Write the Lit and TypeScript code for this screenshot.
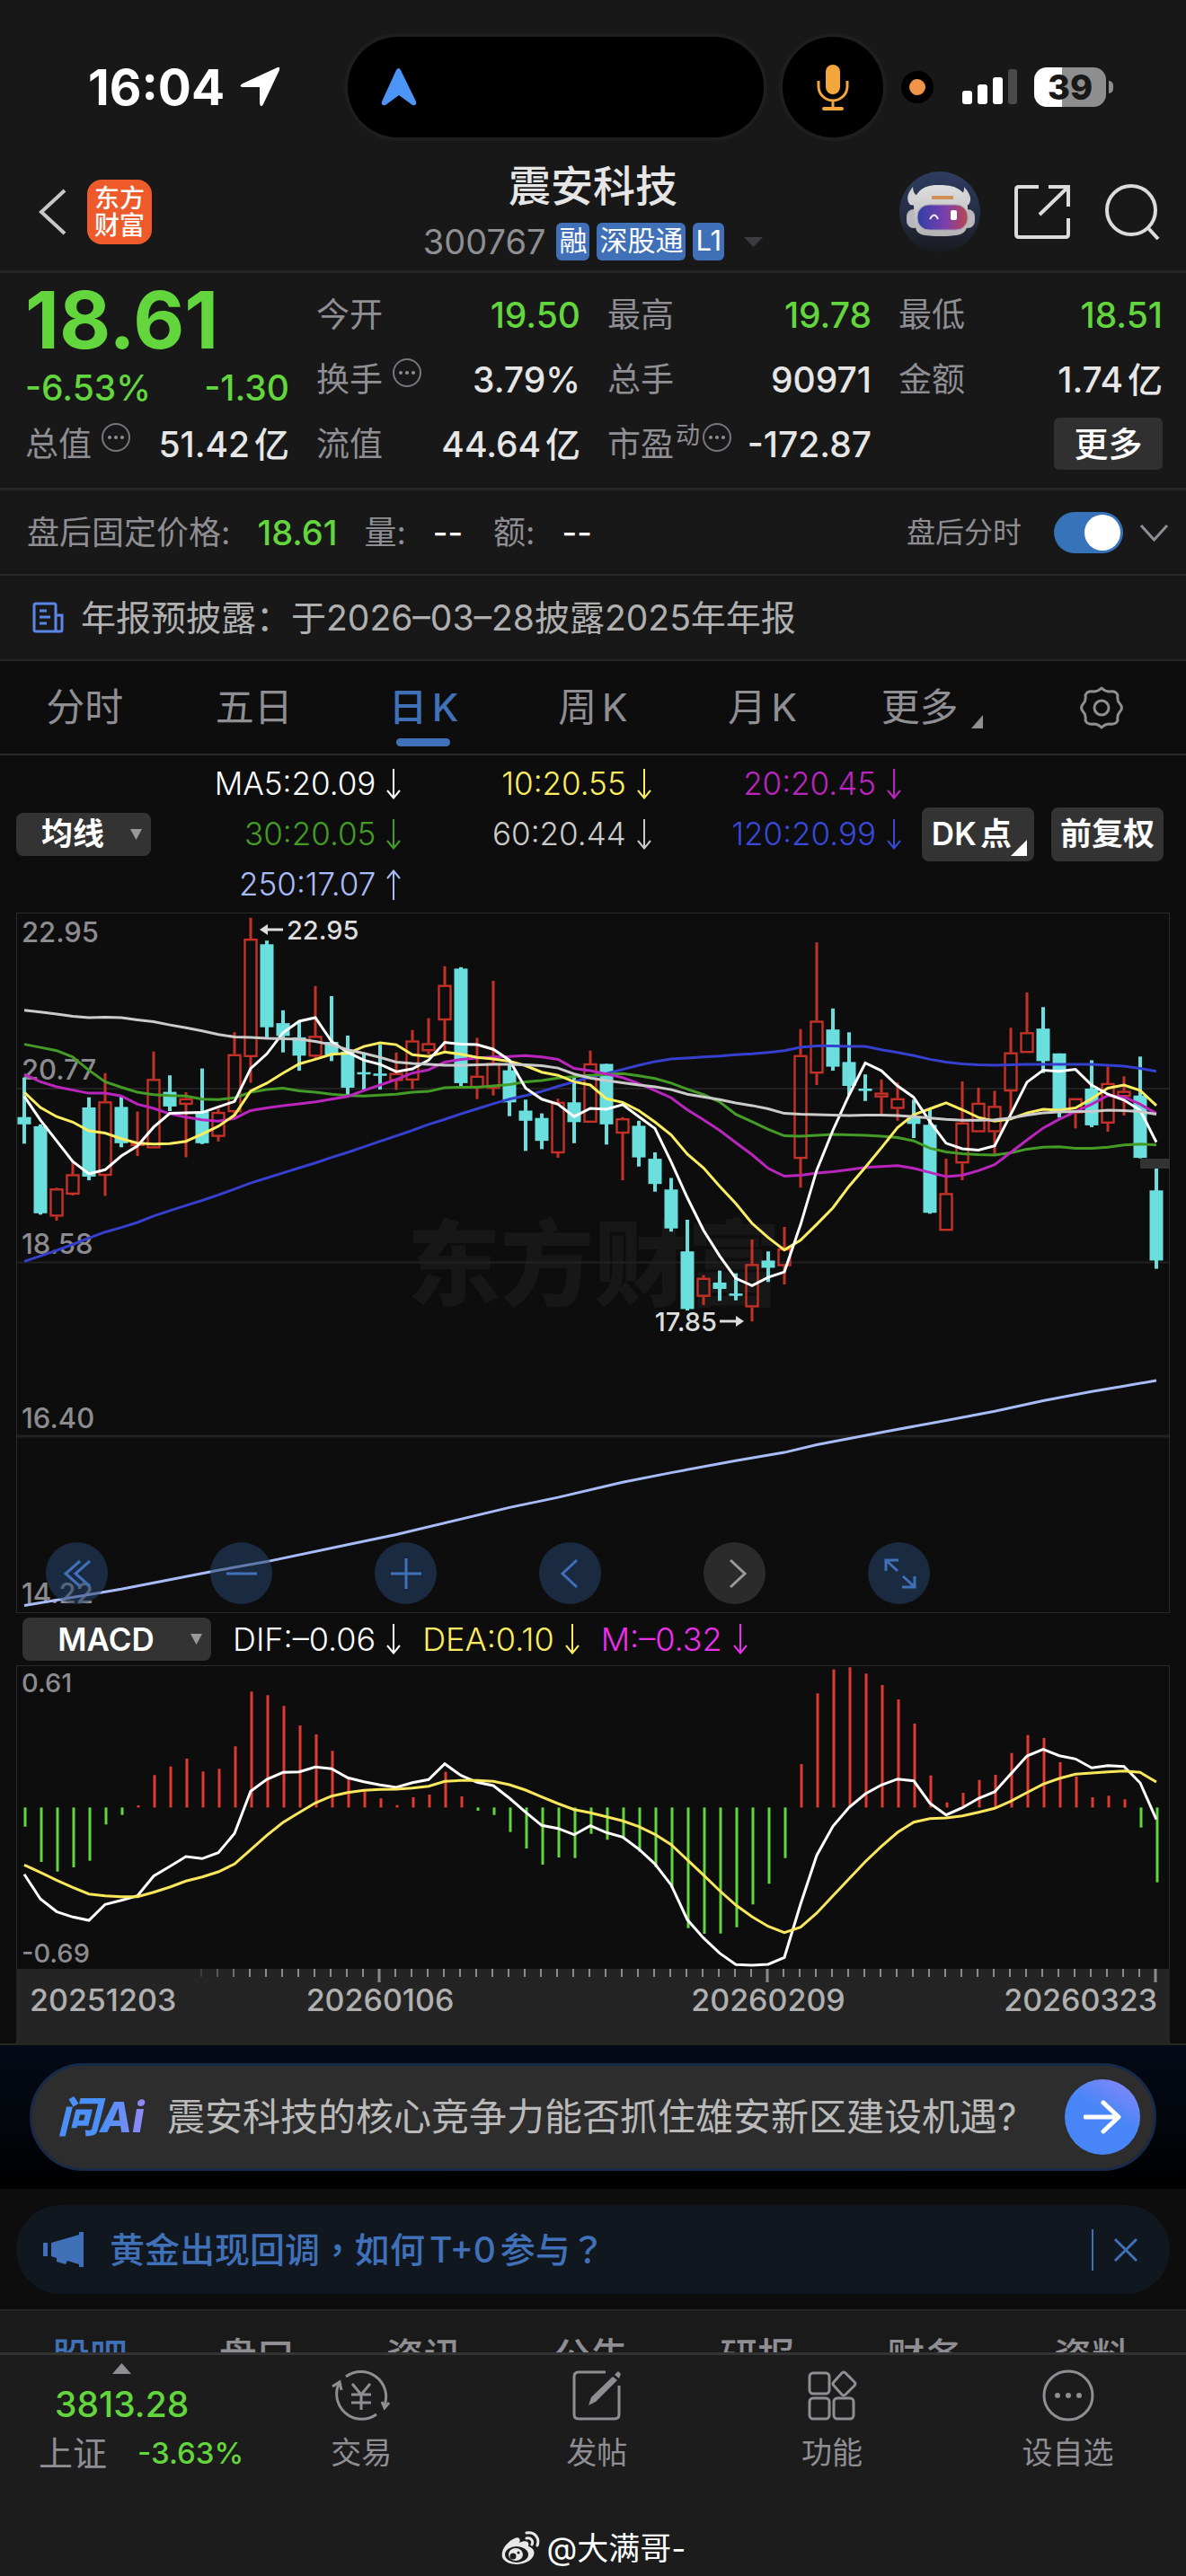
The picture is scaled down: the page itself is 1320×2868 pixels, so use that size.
import { LitElement, html, svg, css, nothing } from "lit";
import { customElement, state } from "lit/decorators.js";
import { classMap } from "lit/directives/class-map.js";

/* ---------- data ---------- */

type Tone = "up" | "down" | "plain";

// Candle: direction, high, body top, body bottom, low (grid units, see GRID)
type Candle = ["r" | "c", number, number, number, number];

const candles: Candle[] = [
  ["c", 372, 458, 474, 516], ["c", 474, 478, 668, 671], ["r", 612, 614, 675, 684], ["r", 556, 583, 627, 629],
  ["c", 415, 437, 588, 596], ["r", 362, 424, 586, 630], ["c", 412, 436, 515, 524], ["r", 446, 512, 521, 543],
  ["r", 315, 375, 526, 526], ["c", 367, 403, 435, 445], ["r", 404, 417, 431, 546], ["c", 352, 446, 515, 517],
  ["r", 440, 447, 501, 511], ["r", 273, 321, 447, 455], ["r", 23, 69, 327, 383], ["c", 73, 81, 262, 284],
  ["c", 225, 253, 281, 317], ["c", 250, 284, 324, 357], ["r", 172, 281, 326, 330], ["c", 194, 294, 322, 336],
  ["c", 280, 315, 394, 410], ["c", 320, 360, 365, 398], ["c", 300, 363, 368, 398], ["r", 317, 362, 379, 399],
  ["r", 268, 291, 378, 397], ["r", 242, 297, 314, 321], ["r", 129, 170, 247, 317], ["c", 131, 134, 384, 391],
  ["r", 285, 368, 394, 419], ["r", 161, 340, 396, 411], ["c", 345, 356, 426, 456], ["c", 420, 444, 466, 532],
  ["c", 450, 460, 510, 528], ["r", 418, 425, 537, 547], ["c", 372, 426, 469, 515], ["r", 313, 341, 470, 470],
  ["c", 342, 342, 474, 518], ["r", 458, 461, 494, 596], ["c", 466, 477, 546, 566], ["c", 535, 549, 604, 621],
  ["c", 591, 616, 701, 708], ["c", 682, 751, 877, 880], ["r", 803, 809, 850, 868], ["c", 793, 819, 833, 859],
  ["c", 799, 843, 848, 858], ["r", 725, 779, 873, 904], ["c", 751, 771, 787, 818], ["r", 698, 745, 783, 823],
  ["r", 266, 323, 549, 612], ["r", 77, 248, 363, 388], ["c", 221, 267, 348, 357], ["c", 273, 338, 390, 410],
  ["c", 365, 396, 401, 423], ["r", 376, 405, 415, 452], ["r", 382, 417, 440, 466], ["c", 420, 460, 473, 504],
  ["c", 440, 475, 667, 669], ["r", 549, 624, 706, 706], ["r", 380, 470, 559, 596], ["r", 394, 427, 491, 491],
  ["r", 401, 434, 491, 540], ["r", 263, 317, 402, 450], ["r", 186, 273, 318, 318], ["c", 218, 265, 336, 362],
  ["c", 319, 319, 444, 459], ["r", 417, 417, 450, 483], ["c", 334, 396, 476, 480], ["r", 348, 384, 472, 490],
  ["r", 369, 401, 414, 455], ["c", 326, 411, 547, 548], ["c", 569, 618, 771, 789],
];

const averages: { color: string; width: number; values: number[] }[] = [
  { color: "#3640d0", width: 3, values: [773, 761, 749, 736, 722, 709, 699, 688, 674, 662, 651, 640, 628, 615, 602, 591, 580, 569, 558, 546, 535, 523, 511, 499, 487, 474, 463, 451, 440, 429, 419, 411, 402, 391, 381, 371, 363, 354, 345, 337, 331, 329, 327, 325, 322, 320, 317, 313, 306, 303, 303, 304, 304, 311, 317, 324, 332, 338, 342, 344, 345, 344, 343, 343, 343, 343, 343, 345, 347, 352, 358] },
  { color: "#449c27", width: 3, values: [299, 306, 313, 327, 356, 381, 393, 404, 409, 411, 412, 419, 420, 416, 404, 398, 395, 401, 404, 408, 411, 412, 410, 408, 404, 402, 394, 393, 393, 390, 387, 381, 378, 373, 370, 367, 365, 363, 368, 374, 384, 397, 409, 425, 452, 468, 485, 499, 500, 498, 496, 497, 498, 500, 503, 510, 526, 534, 538, 540, 541, 536, 528, 524, 523, 526, 526, 524, 519, 517, 519] },
  { color: "#ba25bd", width: 3, values: [365, 381, 392, 399, 406, 406, 412, 430, 439, 451, 458, 464, 467, 461, 444, 438, 433, 429, 425, 419, 413, 400, 388, 376, 362, 355, 338, 332, 329, 327, 326, 324, 327, 332, 352, 357, 364, 372, 385, 400, 416, 442, 464, 487, 514, 540, 570, 587, 585, 580, 577, 573, 568, 566, 564, 570, 579, 588, 585, 575, 562, 535, 508, 482, 463, 446, 430, 411, 414, 430, 450] },
  { color: "#fdee60", width: 3, values: [404, 437, 457, 469, 488, 493, 505, 515, 517, 516, 511, 495, 478, 454, 401, 384, 362, 342, 332, 321, 319, 304, 296, 300, 322, 326, 316, 321, 328, 331, 336, 346, 360, 367, 381, 388, 418, 426, 444, 469, 497, 539, 569, 609, 647, 690, 721, 748, 727, 692, 656, 609, 568, 525, 481, 453, 440, 427, 442, 459, 467, 462, 449, 441, 443, 438, 418, 395, 388, 400, 433] },
  { color: "#ffffff", width: 3, values: [413, 465, 510, 555, 582, 573, 543, 521, 480, 450, 449, 448, 436, 424, 352, 320, 274, 249, 241, 293, 317, 334, 343, 359, 353, 334, 295, 299, 300, 310, 334, 395, 419, 430, 457, 439, 441, 431, 457, 483, 556, 634, 705, 761, 810, 826, 808, 796, 693, 574, 487, 410, 340, 357, 390, 415, 468, 515, 527, 530, 521, 452, 382, 356, 358, 354, 388, 408, 421, 443, 513] },
  { color: "#cbcbcb", width: 3, values: [225, 229, 233, 238, 241, 240, 241, 246, 250, 257, 263, 270, 278, 283, 284, 286, 287, 288, 293, 300, 311, 319, 328, 338, 341, 343, 345, 345, 344, 343, 343, 344, 346, 351, 364, 373, 378, 383, 388, 392, 398, 408, 414, 420, 427, 433, 440, 450, 452, 453, 454, 455, 454, 454, 455, 457, 460, 463, 465, 465, 464, 460, 454, 449, 447, 446, 446, 443, 444, 446, 452] },
];

const yearAverage: [number, number][] = [
  [0, 1524], [6, 1488], [12, 1447], [15, 1428], [20, 1391], [23, 1369], [30, 1310], [33, 1288], [37, 1255],
  [40, 1234], [44, 1208], [47, 1190], [49, 1173], [53, 1146], [57, 1120], [60, 1100], [63, 1077], [66, 1057], [68, 1045], [70, 1033],
];

const macdBars = [
  731, 849, 881, 867, 845, 724, 692, 660, 559, 530, 504, 547, 538, 463, 280, 292, 328, 393, 423, 478, 570, 614, 637, 659,
  633, 624, 548, 630, 678, 692, 749, 804, 858, 834, 836, 755, 775, 772, 815, 866, 936, 1070, 1089, 1088, 1067, 991, 922,
  836, 522, 286, 206, 199, 220, 258, 306, 387, 560, 650, 618, 575, 558, 485, 425, 435, 516, 563, 633, 628, 640, 734, 917,
];
const dif = [
  890, 973, 1015, 1033, 1044, 991, 977, 962, 896, 864, 831, 838, 818, 754, 613, 573, 550, 548, 532, 538, 568, 581, 592,
  600, 584, 574, 521, 560, 583, 594, 636, 683, 727, 737, 758, 728, 751, 766, 806, 856, 926, 1042, 1103, 1154, 1192, 1194,
  1191, 1168, 990, 827, 730, 667, 622, 592, 572, 578, 653, 692, 668, 637, 615, 555, 495, 473, 494, 505, 535, 527, 530, 585, 707,
];
const dea = [
  859, 884, 910, 934, 956, 962, 965, 965, 950, 933, 913, 899, 882, 856, 808, 760, 717, 684, 652, 629, 617, 610, 607, 606,
  602, 596, 580, 577, 577, 580, 591, 609, 632, 654, 674, 685, 698, 712, 731, 757, 791, 842, 893, 945, 993, 1032, 1064,
  1085, 1067, 1020, 962, 905, 848, 797, 750, 716, 704, 702, 695, 683, 670, 646, 617, 589, 570, 556, 552, 548, 545, 550, 582,
];

/* ---------- shared pieces ---------- */

const STEP = 18;
const GRID = 1.96;
const round = (v: number) => Math.round(v * 10) / 10;

const arrowIcon = (up = false) => html`<svg class="arrow" viewBox="0 0 16 34" aria-hidden="true">
  <path d=${up ? "M8 34V2M1 10L8 1.500L15 10" : "M8 0V32M1 24L8 32.500L15 24"} fill="none" stroke="currentColor" stroke-width="2" />
</svg>`;

const dotsIcon = () => html`<svg class="dots" viewBox="0 0 34 34" aria-hidden="true">
  <circle cx="17" cy="17" r="15" fill="none" stroke="#77777b" stroke-width="2" />
  <circle cx="10" cy="17" r="2" fill="#8e8e93" /><circle cx="17" cy="17" r="2" fill="#8e8e93" /><circle cx="24" cy="17" r="2" fill="#8e8e93" />
</svg>`;

/* ---------- K-line chart ---------- */

@customElement("kline-chart")
export class KlineChart extends LitElement {
  static styles = css`
    :host { display: block; }
    .canvas { display: block; width: 100%; height: auto; }
    text { font-family: Inter, "Noto Sans CJK SC", sans-serif; }
    .scale { font-size: 31px; font-weight: 500; fill: #8c8c90; }
    .mark { font-size: 29px; font-weight: 500; fill: #dedede; }
    .brand { font-size: 104px; font-weight: 900; fill: #171717; }
  `;

  private x(i: number) { return 9 + i * STEP; }
  private y(v: number) { return round(v / GRID - 6); }

  private line(points: [number, number][]) {
    return points.map(([i, v]) => `${this.x(i)},${this.y(v)}`).join(" ");
  }

  private candle([dir, high, top, bottom, low]: Candle, i: number) {
    const x = this.x(i);
    const t = this.y(top);
    const b = this.y(bottom);
    if (dir === "c") {
      return svg`<path d=${`M${x} ${this.y(high)}V${this.y(low)}`} stroke="#6adfde" stroke-width="4" />
        <rect x=${x - 7.5} y=${t} width="15" height=${Math.max(2, b - t)} fill="#6adfde" />`;
    }
    return svg`<path d=${`M${x} ${this.y(high)}V${t}M${x} ${b}V${this.y(low)}`} stroke="#c53027" stroke-width="3" />
      <rect x=${x - 6.5} y=${t + 1} width="13" height=${Math.max(2, b - t - 2)} fill="none" stroke="#c53027" stroke-width="2.400" />`;
  }

  render() {
    return html`<svg class="canvas" viewBox="0 0 1284 780" role="img" aria-label="日K">
      <text class="brand" x="643" y="430" text-anchor="middle">东方财富</text>
      <path d="M0 196H1284M0 389.500H1284" stroke="#212121" stroke-width="2" />
      <path d="M0 583H1284" stroke="#212121" stroke-width="3" />
      <rect x="0.500" y="0.500" width="1283" height="779" fill="none" stroke="#2a2a2a" />
      <text class="scale" x="6" y="33">22.95</text>
      <text class="scale" x="6" y="186">20.77</text>
      <text class="scale" x="6" y="380">18.58</text>
      <text class="scale" x="6" y="574">16.40</text>
      <text class="scale" x="6" y="769">14.22</text>
      ${candles.map((c, i) => this.candle(c, i))}
      <rect x="1251" y="274" width="33" height="11" fill="#333333" />
      ${averages.map((a) => svg`<polyline points=${this.line(a.values.map((v, i) => [i, v]))} fill="none" stroke=${a.color} stroke-width=${a.width} />`)}
      <polyline points=${this.line(yearAverage)} fill="none" stroke="#a9bcfa" stroke-width="3" />
      <path d="M278 19H297" stroke="#dedede" stroke-width="3" /><path d="M271 19L280 13V25Z" fill="#dedede" />
      <text class="mark" x="301" y="30">22.95</text>
      <path d="M783 455H802" stroke="#dedede" stroke-width="3" /><path d="M810 455L801 449V461Z" fill="#dedede" />
      <text class="mark" x="780" y="466" text-anchor="end">17.85</text>
    </svg>`;
  }
}

/* ---------- MACD chart with the date axis ---------- */

@customElement("macd-chart")
export class MacdChart extends LitElement {
  static styles = css`
    :host { display: block; }
    .canvas { display: block; width: 100%; height: auto; }
    text { font-family: Inter, sans-serif; font-weight: 500; }
    .scale { font-size: 29px; fill: #8c8c90; }
    .date { font-size: 34px; fill: #b0b0b0; }
  `;

  private y(v: number) { return round(v / 3 - 64); }

  private line(values: number[]) {
    return values.map((v, i) => `${9 + i * STEP},${this.y(v)}`).join(" ");
  }

  private tick(i: number) {
    const major = i === 22 || i === 46 || i === 70;
    const opacity = i < 14 ? 0.25 * (i - 10) : 1;
    return svg`<path d=${`M${8 + i * STEP} 338V${major ? 353 : 347}`} stroke="#8a8a8a" stroke-width=${major ? 3 : 2} opacity=${opacity} />`;
  }

  render() {
    const zero = 158.4;
    return html`<svg class="canvas" viewBox="0 0 1284 421" role="img" aria-label="MACD">
      <rect x="0.500" y="0.500" width="1283" height="420" fill="none" stroke="#2a2a2a" />
      <rect x="0" y="338" width="1284" height="83" fill="#242424" />
      <text class="scale" x="6" y="30">0.61</text>
      <text class="scale" x="6" y="331">-0.69</text>
      ${macdBars.map((v, i) => svg`<path d=${`M${10 + i * STEP} ${zero}V${this.y(v)}`} stroke=${v < 667 ? "#e03a31" : "#63d63e"} stroke-width="3" />`)}
      <polyline points=${this.line(dif)} fill="none" stroke="#ffffff" stroke-width="3" />
      <polyline points=${this.line(dea)} fill="none" stroke="#fbe75b" stroke-width="3" />
      ${Array.from({ length: 60 }, (_, k) => this.tick(k + 11))}
      <text class="date" x="15" y="385">20251203</text>
      <text class="date" x="405" y="385" text-anchor="middle">20260106</text>
      <text class="date" x="837" y="385" text-anchor="middle">20260209</text>
      <text class="date" x="1270" y="385" text-anchor="end">20260323</text>
    </svg>`;
  }
}

/* ---------- page ---------- */

@customElement("app-root")
export class AppRoot extends LitElement {
  @state() private period = 2;
  @state() private afterHours = true;

  static styles = css`
    :host {
      display: block;
      background: #0d0d0d;
      color: #e6e6e6;
      font-family: Inter, "Noto Sans CJK SC", sans-serif;
      font-size: 36px;
      line-height: 1;
      text-autospace: normal;
    }
    * { box-sizing: border-box; }
    svg { display: block; flex: none; }
    button, select, input { font: inherit; color: inherit; margin: 0; padding: 0; border: 0; background: none; }
    a { color: inherit; text-decoration: none; }
    h1 { margin: 0; }
    .green { color: #63d63e; }

    .top { background: #181818; }

    .status { display: flex; align-items: center; height: 182px; padding: 12px 80px 0 98px; }
    .clock { font-size: 55px; font-weight: 700; color: #fff; width: 168px; white-space: nowrap; }
    .locate { width: 46px; height: 46px; }
    .island { display: flex; align-items: center; height: 112px; margin-left: 75px; width: 463px; border-radius: 56px; background: #000; box-shadow: 0 0 0 4px #1e1e1e; padding-left: 37px; }
    .mic { display: grid; place-items: center; width: 112px; height: 112px; margin-left: 21px; border-radius: 50%; background: #000; box-shadow: 0 0 0 4px #1e1e1e; }
    .dot { width: 36px; height: 36px; margin-left: 20px; border: 9px solid #000; border-radius: 50%; background: #f0944a; }
    .signal { width: 61px; height: 40px; margin-left: 32px; }
    .battery { position: relative; display: grid; place-items: center; width: 80px; height: 44px; margin-left: 19px; border-radius: 14px; background: linear-gradient(90deg, #fff 39%, #8e8e8e 39%); font-size: 38px; font-weight: 800; color: #181818; }
    .battery::after { content: ""; position: absolute; right: -8px; top: 15px; width: 5px; height: 14px; border-radius: 0 5px 5px 0; background: #8e8e8e; }

    .header { display: grid; grid-template-columns: 1fr auto 1fr; align-items: center; height: 122px; padding: 0 29px 13px; border-bottom: 3px solid #262626; }
    .lead { display: flex; align-items: center; gap: 22px; padding-left: 13px; }
    .brand { display: grid; place-content: center; width: 72px; height: 72px; border-radius: 16px; background: #ee5a2a; color: #fff; font-size: 28px; line-height: 30px; font-weight: 500; }
    .name { display: flex; flex-direction: column; align-items: center; gap: 16px; }
    .title { font-size: 47px; line-height: 50px; font-weight: 500; color: #e6e6e6; }
    .tags { display: flex; align-items: center; gap: 8px; font-size: 31px; color: #fff; }
    .code { font-size: 38px; color: #8e8e93; margin-right: 4px; }
    .tag { height: 42px; line-height: 40px; padding: 0 3px; border-radius: 6px; background: #4070b8; }
    .expand { margin-left: 14px; }
    .actions { display: flex; justify-content: flex-end; align-items: center; gap: 38px; }

    .quote { display: grid; grid-template-columns: repeat(4, 1fr); grid-auto-rows: 72px; column-gap: 30px; height: 242px; padding: 10px 26px 0 28px; border-bottom: 3px solid #262626; }
    .last { grid-row: span 2; display: flex; flex-direction: column; justify-content: space-between; padding-bottom: 6px; }
    .price { font-size: 88px; font-weight: 700; line-height: 84px; }
    .change { display: flex; justify-content: space-between; font-size: 39px; line-height: 40px; font-weight: 500; }
    .stat { display: flex; align-items: center; justify-content: space-between; font-size: 39px; font-weight: 500; white-space: nowrap; }
    .label { display: flex; align-items: center; gap: 10px; color: #8e8e93; font-size: 37px; font-weight: 400; }
    .dots { width: 34px; height: 34px; margin-bottom: 14px; }
    .sup { font-size: 27px; margin: 0 -8px 20px -8px; }
    .more { justify-self: end; align-self: center; width: 121px; height: 58px; border-radius: 6px; background: #303030; color: #fff; font-size: 38px; font-weight: 500; }

    .after { display: flex; align-items: center; height: 95px; padding: 0 19px 0 30px; border-bottom: 2px solid #262626; font-size: 36px; color: #8e8e93; white-space: nowrap; }
    .after-value { margin: 0 30px 0 30px; font-size: 38px; font-weight: 500; }
    .after-none { margin: 0 34px 0 30px; color: #fff; font-weight: 500; }
    .switch-label { display: flex; align-items: center; gap: 36px; margin-left: auto; font-size: 32px; }
    .switch { appearance: none; position: relative; width: 77px; height: 46px; border-radius: 23px; background: #3673b9; }
    .switch::after { content: ""; position: absolute; left: 3px; top: 3px; width: 40px; height: 40px; border-radius: 50%; background: #fff; }
    .switch:checked::after { left: auto; right: 3px; }
    .fold { margin-left: 18px; }

    .notice { display: flex; align-items: center; gap: 19px; height: 95px; padding: 0 36px; border-bottom: 2px solid #262626; font-size: 39px; color: #b0b0b0; text-autospace: no-autospace; }

    .periods { display: grid; grid-template-columns: repeat(7, 1fr); height: 105px; border-bottom: 2px solid #262626; }
    .period { position: relative; display: flex; align-items: center; justify-content: center; font-size: 43px; color: #8e8e93; }
    .active { color: #4070b8; font-weight: 500; }
    .active::after { content: ""; position: absolute; left: 50%; bottom: 8px; width: 60px; height: 9px; margin-left: -30px; border-radius: 5px; background: #4070b8; }
    .corner { align-self: flex-end; margin: 0 0 28px 14px; }

    .legend { display: flex; align-items: center; height: 175px; padding: 0 25px 0 18px; }
    .picker { position: relative; display: flex; align-items: center; height: 48px; border-radius: 8px; background: #333; color: #fff; }
    .picker select { appearance: none; height: 48px; width: 100%; padding: 0 50px 0 26px; font-size: 35px; font-weight: 600; text-align: center; }
    .picker svg { position: absolute; right: 10px; pointer-events: none; }
    .ma-picker { width: 150px; }
    .macd-picker { width: 210px; }
    .values { flex: 1; display: grid; grid-template-columns: repeat(3, 1fr); grid-auto-rows: 56px; }
    .value { display: flex; align-items: center; justify-content: flex-end; gap: 12px; font-size: 35px; font-weight: 300; white-space: nowrap; }
    .arrow { width: 16px; height: 34px; }
    .chip { position: relative; width: 125px; height: 60px; border-radius: 8px; background: #333; color: #fff; font-size: 35px; font-weight: 600; white-space: nowrap; }
    .dk { margin: 0 19px 0 23px; padding-right: 14px; }
    .chip svg { position: absolute; right: 8px; bottom: 6px; }
    .white { color: #fff; } .yellow { color: #fdee60; } .magenta { color: #ba25bd; } .leaf { color: #449c27; }
    .silver { color: #cbcbcb; } .blue { color: #3848d8; } .sky { color: #a9bcfa; } .pink { color: #ee30ee; }

    .chart { position: relative; margin: 0 18px; }
    .tools { position: absolute; left: 33px; bottom: 10px; display: flex; gap: 114px; }
    .tool { display: grid; place-items: center; width: 69px; height: 69px; border-radius: 50%; background: rgba(38, 68, 108, 0.55); color: #4070b8; }
    .idle { background: #2b2b2b; color: #9a9a9a; }

    .macd-head { display: flex; align-items: center; gap: 24px; height: 58px; padding: 0 25px; }
    .macd-head .value { font-size: 36px; }
    .axis-end { height: 2px; background: #262626; }

    .ask { padding: 20px 33px; background: linear-gradient(#040b17, #000); }
    .ask-pill { display: flex; align-items: center; height: 120px; padding: 0 15px 0 28px; border: 3px solid #182a49; border-radius: 60px; background: #2d2d2d; }
    .ask-logo { width: 102px; font-size: 47px; font-weight: 800; font-style: italic; background: linear-gradient(90deg, #4a90f8 50%, #9a88f4); -webkit-background-clip: text; background-clip: text; color: transparent; white-space: nowrap; line-height: 60px; text-autospace: no-autospace; }
    .ask-text { flex: 1; margin-left: 20px; font-size: 42px; line-height: 60px; color: #bababa; white-space: nowrap; }
    .ask-go { display: grid; place-items: center; width: 84px; height: 84px; border-radius: 50%; background: linear-gradient(30deg, #4886f7 55%, #9088f8); }

    .tip { display: flex; align-items: center; height: 99px; margin: 18px 18px 17px; padding: 0 35px 0 30px; border-radius: 50px; background: #11171f; color: #4070b8; }
    .tip-text { flex: 1; margin-left: 28px; font-size: 39px; font-weight: 500; font-family: Inter, "Noto Sans CJK TC", sans-serif; }
    .tip-line { width: 2px; height: 46px; margin-right: 22px; background: #4070b8; }

    .sections { display: grid; grid-template-columns: repeat(7, 1fr); height: 48px; padding: 0 12px 0 7px; border-top: 2px solid #262626; background: #1a1a1a; overflow: hidden; }
    .section { align-self: start; margin-top: 26px; height: 50px; font-size: 42px; line-height: 50px; font-weight: 500; color: #8e8e93; text-align: center; }
    .section.current { color: #4070b8; }

    .dock { background: #1c1c1c; border-top: 3px solid #333; }
    .dock-row { display: grid; grid-template-columns: 271fr 262fr 262fr 262fr 263fr; height: 150px; color: #8e8e93; }
    .dock-item { display: flex; flex-direction: column; align-items: center; justify-content: flex-start; gap: 14px; padding-top: 15px; font-size: 34px; line-height: 40px; }
    .index { display: flex; flex-direction: column; align-items: center; padding-top: 9px; font-weight: 500; }
    .index-price { margin-top: 14px; font-size: 39px; line-height: 40px; }
    .index-row { display: flex; align-items: center; gap: 34px; margin-top: 12px; padding-left: 43px; align-self: flex-start; font-size: 38px; line-height: 44px; font-weight: 400; white-space: nowrap; }
    .index-row .green { font-size: 33px; font-weight: 500; }
    .credit { display: flex; align-items: center; justify-content: center; gap: 8px; height: 96px; padding-top: 34px; font-size: 35px; line-height: 40px; color: #fff; text-autospace: no-autospace; }
  `;

  private stat(label: string, value: string, tone: Tone = "plain", dots = false, sup = "") {
    return html`<div class="stat">
      <span class="label">${label}${sup ? html`<span class="sup">${sup}</span>` : nothing}${dots ? dotsIcon() : nothing}</span>
      <span class=${tone === "down" ? "green" : ""}>${value}</span>
    </div>`;
  }

  private statusBar() {
    return html`<div class="status">
      <div class="clock">16:04</div>
      <svg class="locate" viewBox="0 0 46 46"><path d="M43 1Q46 0 45 4L27 42Q24 47 23 41V23H4Q-1 22 4 19Z" fill="#fff" /></svg>
      <div class="island"><svg width="40" height="42" viewBox="0 0 40 42"><path d="M17 2Q20 -2 22 2L39 37Q40 42 35 41L20 30L5 41Q0 42 1 37Z" fill="#4d94f7" /></svg></div>
      <div class="mic"><svg width="36" height="52" viewBox="0 0 36 52"><rect x="10" y="1" width="16" height="33" rx="8" fill="#f2a63b" /><path d="M2 19V25A16 16 0 0 0 34 25V19M18 41V49" fill="none" stroke="#f2a63b" stroke-width="3" /><rect x="6" y="48" width="24" height="4" rx="2" fill="#f2a63b" /></svg></div>
      <div class="dot"></div>
      <svg class="signal" viewBox="0 0 61 40"><rect x="0" y="24" width="11" height="15" rx="3" fill="#fff" /><rect x="17" y="17" width="11" height="22" rx="3" fill="#fff" /><rect x="34" y="9" width="11" height="30" rx="3" fill="#fff" /><rect x="51" y="0" width="10" height="39" rx="3" fill="#4a4a4a" /></svg>
      <div class="battery">39</div>
    </div>`;
  }

  private header() {
    return html`<header class="header">
      <div class="lead">
        <button aria-label="返回"><svg width="33" height="52" viewBox="0 0 33 52"><path d="M30 2L4 26L30 50" fill="none" stroke="#c8c8c8" stroke-width="4" /></svg></button>
        <div class="brand"><span>东方</span><span>财富</span></div>
      </div>
      <div class="name">
        <h1 class="title">震安科技</h1>
        <div class="tags"><span class="code">300767</span><span class="tag">融</span><span class="tag">深股通</span><span class="tag">L1</span>
          <svg class="expand" width="21" height="11" viewBox="0 0 21 11"><path d="M0 0H21L10.500 11Z" fill="#3c3c3e" /></svg></div>
      </div>
      <div class="actions">
        <button aria-label="助手"><svg width="90" height="90" viewBox="0 0 90 90">
          <defs>
            <linearGradient id="sky" x2="0" y2="1"><stop offset="0" stop-color="#2e3c60" /><stop offset="0.600" stop-color="#232b3f" /><stop offset="1" stop-color="#191a1e" /></linearGradient>
            <linearGradient id="visor"><stop offset="0" stop-color="#2f3fa6" /><stop offset="0.550" stop-color="#7b3fae" /><stop offset="1" stop-color="#b8474f" /></linearGradient>
            <linearGradient id="shell" x2="0" y2="1"><stop offset="0" stop-color="#dededf" /><stop offset="1" stop-color="#b4b2b4" /></linearGradient>
          </defs>
          <circle cx="45" cy="45" r="45" fill="url(#sky)" />
          <path d="M15 17Q5 29 12 37L20 38L26 28Q15 28 15 17ZM72 17Q83 29 77 37L69 38L61 26Q73 28 72 17Z" fill="#d2d1d4" />
          <rect x="8" y="42" width="16" height="21" rx="8" fill="#b9b8bc" /><rect x="68" y="42" width="16" height="21" rx="8" fill="#b9b8bc" />
          <path d="M45 15C26 14 16 23 16 40L18 62C19 70 26 72 46 72S73 70 75 62L76 40C76 23 66 15 45 15Z" fill="url(#shell)" />
          <rect x="36" y="27" width="24" height="4" rx="1" fill="#cf8f55" />
          <rect x="20" y="37" width="56" height="28" rx="13" fill="url(#visor)" stroke="#a59fb0" />
          <path d="M34 53Q39 44 43 53" fill="none" stroke="#f0eaff" stroke-width="2" /><rect x="57" y="43" width="7" height="11" rx="2" fill="#fff" />
        </svg></button>
        <button aria-label="分享"><svg width="62" height="62" viewBox="0 0 62 62"><path d="M27 3H5Q2 3 2 6V56Q2 59 5 59H57Q60 59 60 56V38M38 3H60V25M60 3L28 34" fill="none" stroke="#dcdcdc" stroke-width="4" /></svg></button>
        <button aria-label="搜索"><svg width="62" height="62" viewBox="0 0 62 62"><circle cx="30" cy="29" r="27" fill="none" stroke="#dcdcdc" stroke-width="4" /><path d="M48 48L60 61" stroke="#dcdcdc" stroke-width="4" /></svg></button>
      </div>
    </header>`;
  }

  private quote() {
    return html`<section class="quote">
      <div class="last green"><div class="price">18.61</div><div class="change"><span>-6.53%</span><span>-1.30</span></div></div>
      ${this.stat("今开", "19.50", "down")}${this.stat("最高", "19.78", "down")}${this.stat("最低", "18.51", "down")}
      ${this.stat("换手", "3.79%", "plain", true)}${this.stat("总手", "90971")}${this.stat("金额", "1.74亿")}
      ${this.stat("总值", "51.42亿", "plain", true)}${this.stat("流值", "44.64亿")}${this.stat("市盈", "-172.87", "plain", true, "动")}
      <button class="more">更多</button>
    </section>`;
  }

  private afterBar() {
    return html`<section class="after">
      <span>盘后固定价格:</span><span class="after-value green">18.61</span>
      <span>量:</span><span class="after-none">--</span>
      <span>额:</span><span class="after-none">--</span>
      <label class="switch-label">盘后分时
        <input class="switch" type="checkbox" .checked=${this.afterHours} @change=${() => (this.afterHours = !this.afterHours)} />
      </label>
      <button class="fold" aria-label="展开"><svg width="33" height="20" viewBox="0 0 33 20"><path d="M2 2L16.500 18L31 2" fill="none" stroke="#8e8e93" stroke-width="3" /></svg></button>
    </section>
    <a class="notice" href="#report">
      <svg width="35" height="35" viewBox="0 0 35 35"><path d="M26 33H4Q2 33 2 31V4Q2 2 4 2H24Q26 2 26 4V33H31Q33 33 33 31V15H26M8 10H16M8 17H20M8 24H16" fill="none" stroke="#5a86e8" stroke-width="3" /></svg>
      <span>年报预披露：于2026–03–28披露2025年年报</span>
    </a>`;
  }

  private periods() {
    return html`<nav class="periods">
      ${["分时", "五日", "日K", "周K", "月K"].map((name, i) => html`<button class=${classMap({ period: true, active: i === this.period })} @click=${() => (this.period = i)}>${name}</button>`)}
      <button class="period">更多<svg class="corner" width="13" height="15" viewBox="0 0 13 15"><path d="M13 0V15H0Z" fill="#8e8e93" /></svg></button>
      <button class="period" aria-label="设置"><svg width="50" height="48" viewBox="0 0 50 48">
        <path d="M25 2Q29 6 34 6Q41 5 43 10Q42 16 45 19Q50 24 45 29Q42 32 43 38Q41 43 34 42Q29 42 25 46Q21 42 16 42Q9 43 7 38Q8 32 5 29Q0 24 5 19Q8 16 7 10Q9 5 16 6Q21 6 25 2Z" fill="none" stroke="#8e8e93" stroke-width="3" stroke-linejoin="round" />
        <circle cx="25" cy="24" r="8" fill="none" stroke="#8e8e93" stroke-width="3" /></svg></button>
    </nav>`;
  }

  private value(tone: string, text: string, up = false) {
    return html`<span class="value ${tone}">${text}${arrowIcon(up)}</span>`;
  }

  private legend() {
    const caret = html`<svg width="13" height="12" viewBox="0 0 13 12"><path d="M0 0H13L6.500 12Z" fill="#999" /></svg>`;
    return html`<section class="legend">
      <div class="picker ma-picker"><select aria-label="主图指标"><option>均线</option></select>${caret}</div>
      <div class="values">
        ${this.value("white", "MA5:20.09")}${this.value("yellow", "10:20.55")}${this.value("magenta", "20:20.45")}
        ${this.value("leaf", "30:20.05")}${this.value("silver", "60:20.44")}${this.value("blue", "120:20.99")}
        ${this.value("sky", "250:17.07", true)}
      </div>
      <button class="chip dk">DK点<svg width="18" height="18" viewBox="0 0 18 18"><path d="M18 0V18H0Z" fill="#fff" /></svg></button>
      <button class="chip">前复权</button>
    </section>`;
  }

  private charts() {
    const tools: [string, string, boolean][] = [
      ["最早", "M27 10L11 24L27 38M38 10L22 24L38 38", false],
      ["缩小", "M7 24H41", false],
      ["放大", "M7 24H41M24 7V41", false],
      ["向左", "M31 9L15 24L31 39", false],
      ["向右", "M19 9L35 24L19 39", true],
      ["全屏", "M9 21V9H23M9 9L22 21M41 27V39H27M41 39L28 27", false],
    ];
    return html`<div class="chart">
      <kline-chart></kline-chart>
      <div class="tools">
        ${tools.map(([name, d, idle]) => html`<button class=${classMap({ tool: true, idle })} aria-label=${name}>
          <svg width="48" height="48" viewBox="0 0 48 48"><path d=${d} fill="none" stroke="currentColor" stroke-width="3" /></svg></button>`)}
      </div>
    </div>
    <div class="macd-head">
      <div class="picker macd-picker"><select aria-label="副图指标"><option>MACD</option></select>
        <svg width="13" height="12" viewBox="0 0 13 12"><path d="M0 0H13L6.500 12Z" fill="#999" /></svg></div>
      ${this.value("white", "DIF:–0.06")}${this.value("yellow", "DEA:0.10")}${this.value("pink", "M:–0.32")}
    </div>
    <div class="chart"><macd-chart></macd-chart></div>
    <div class="axis-end"></div>`;
  }

  private promos() {
    return html`<section class="ask"><div class="ask-pill">
      <span class="ask-logo">问Ai</span>
      <a class="ask-text" href="#ask">震安科技的核心竞争力能否抓住雄安新区建设机遇?</a>
      <button class="ask-go" aria-label="提问"><svg width="42" height="38" viewBox="0 0 42 38"><path d="M2 19H38M22 3L39 19L22 35" fill="none" stroke="#fff" stroke-width="5" stroke-linecap="round" stroke-linejoin="round" /></svg></button>
    </div></section>
    <section class="tip">
      <svg width="46" height="40" viewBox="0 0 46 40"><path d="M0 12H5V27H0ZM9 12L40 3V0H45V39H40V36L27 32L25 36L15 33V29L9 27Z" fill="#4070b8" /></svg>
      <a class="tip-text" href="#gold">黄金出现回调，如何T+0参与？</a>
      <span class="tip-line"></span>
      <button aria-label="关闭"><svg width="28" height="28" viewBox="0 0 28 28"><path d="M2 2L26 26M26 2L2 26" stroke="#4070b8" stroke-width="3" /></svg></button>
    </section>`;
  }

  private dock() {
    const g = "#8e8e93";
    return html`<nav class="sections">
      ${["股吧", "盘口", "资讯", "公告", "研报", "财务", "资料"].map((t, i) => html`<button class=${classMap({ section: true, current: i === 0 })}>${t}</button>`)}
    </nav>
    <footer class="dock">
      <div class="dock-row">
        <div class="index">
          <svg width="21" height="12" viewBox="0 0 21 12"><path d="M10.500 0L21 12H0Z" fill=${g} /></svg>
          <span class="index-price green">3813.28</span>
          <div class="index-row"><span>上证</span><span class="green">-3.63%</span></div>
        </div>
        <button class="dock-item"><svg width="66" height="60" viewBox="0 0 66 60">
          <path d="M16 9A28 28 0 0 1 59 41M50 51A28 28 0 0 1 9 15M1 20L9 15L11 24M64 38L59 44L56 37" fill="none" stroke=${g} stroke-width="3" />
          <path d="M23 17L33 29L43 17M33 29V46M22 29H44M22 38H44" fill="none" stroke=${g} stroke-width="3" /></svg>交易</button>
        <button class="dock-item"><svg width="56" height="60" viewBox="0 0 56 60">
          <path d="M38 4H8Q3 4 3 9V51Q3 56 8 56H48Q53 56 53 51V19" fill="none" stroke=${g} stroke-width="3" />
          <path d="M46 9L51 13L27 37L19 41L22 32ZM48 7L52 3L55 6L53 11Z" fill=${g} /></svg>发帖</button>
        <button class="dock-item"><svg width="56" height="60" viewBox="0 0 56 60">
          <g fill="none" stroke=${g} stroke-width="3"><rect x="3" y="5" width="22" height="23" rx="4" /><rect x="3" y="33" width="22" height="23" rx="4" /><rect x="30" y="33" width="22" height="23" rx="4" /><path d="M39 5Q41 3 43 5L53 15Q55 17 53 19L43 29Q41 31 39 29L30 19Q28 17 30 15Z" /></g></svg>功能</button>
        <button class="dock-item"><svg width="58" height="60" viewBox="0 0 58 60">
          <circle cx="29" cy="30" r="27" fill="none" stroke=${g} stroke-width="3" /><circle cx="17" cy="30" r="3" fill=${g} /><circle cx="29" cy="30" r="3" fill=${g} /><circle cx="41" cy="30" r="3" fill=${g} /></svg>设自选</button>
      </div>
      <div class="credit">
        <svg width="44" height="38" viewBox="0 0 44 38">
          <path d="M16 8C20 6 23 8 21 13C27 10 33 11 31 17C40 20 39 28 32 33C22 39 8 38 3 31C-2 23 8 11 16 8Z" fill="#e8e8e8" />
          <ellipse cx="18" cy="26" rx="13" ry="9" fill="#1c1c1c" /><ellipse cx="17" cy="26" rx="8" ry="7" fill="#e8e8e8" /><circle cx="14" cy="28" r="3.500" fill="#1c1c1c" /><circle cx="20" cy="24" r="1.500" fill="#1c1c1c" />
          <path d="M29 2C38 0 44 8 41 16M29 8C34 7 37 11 35 15" fill="none" stroke="#e8e8e8" stroke-width="3" stroke-linecap="round" />
        </svg><span>@大满哥-</span>
      </div>
    </footer>`;
  }

  render() {
    return html`
      <div class="top">${this.statusBar()}${this.header()}${this.quote()}${this.afterBar()}</div>
      ${this.periods()}${this.legend()}${this.charts()}${this.promos()}${this.dock()}
    `;
  }
}
